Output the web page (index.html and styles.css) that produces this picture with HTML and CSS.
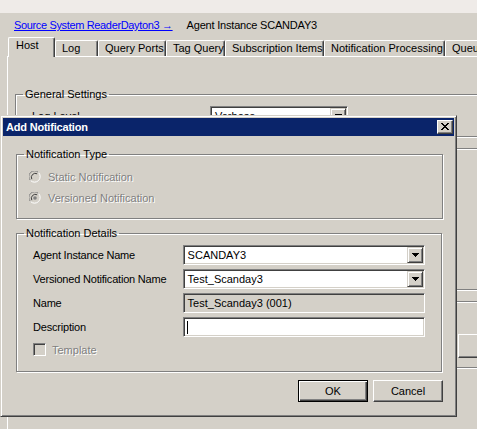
FILE: index.html
```html
<!DOCTYPE html>
<html>
<head>
<meta charset="utf-8">
<link rel="stylesheet" href="styles.css">
</head>
<body>
<div class="app">
  <div class="topstrip"></div>
  <div class="crumbs">
    <a href="#" class="crumb-link">Source System ReaderDayton3 &rarr;</a>
    <span class="agent">Agent Instance SCANDAY3</span>
  </div>
  <div class="tabs">
    <div class="tab active tab-host">Host</div>
    <div class="tab tab-log">Log</div>
    <div class="tab tab-ports">Query Ports</div>
    <div class="tab tab-tag">Tag Query</div>
    <div class="tab tab-sub">Subscription Items</div>
    <div class="tab tab-notif">Notification Processing</div>
    <div class="tab tab-queue">Queue</div>
  </div>
  <div class="panel">
    <fieldset class="group general">
      <legend>General Settings</legend>
      <div class="gen-row">
        <span class="gen-label">Log Level</span>
        <div class="combo gen-combo">
          <span class="combo-text">Verbose</span>
          <span class="drop"><svg width="7" height="4" viewBox="0 0 7 4"><path d="M0 0h7v1h-7zM1 1h5v1h-5zM2 2h3v1h-3zM3 3h1v1h-1z" fill="#000"/></svg></span>
        </div>
      </div>
    </fieldset>
    <div class="etched bg-group2"></div>
    <div class="etched bg-group3"><div class="bg-btn"></div></div>
  </div>
</div>

<div class="dialog">
  <div class="titlebar">
    <span class="title">Add Notification</span>
    <span class="close"><svg width="8" height="7" viewBox="0 0 8 7"><path d="M0 0h2v1h-2zM6 0h2v1h-2zM1 1h2v1h-2zM5 1h2v1h-2zM2 2h4v1h-4zM3 3h2v1h-2zM2 4h4v1h-4zM1 5h2v1h-2zM5 5h2v1h-2zM0 6h2v1h-2zM6 6h2v1h-2z" fill="#000"/></svg></span>
  </div>
  <div class="dlg-body">
    <fieldset class="group type-group">
      <legend>Notification Type</legend>
      <div class="group-inner type-inner">
        <div class="radio-row disabled">
          <span class="radio"><svg width="12" height="12" viewBox="0 0 12 12"><path d="M1.5 9.5A5 5 0 0 1 9.5 1.5" fill="none" stroke="#808080"/><path d="M9.5 1.5A5 5 0 0 1 1.5 9.5" fill="none" stroke="#fff"/><circle cx="6" cy="6" r="4" fill="#d4d0c8"/><path d="M2.8 8.2A4 4 0 0 1 8.2 2.8" fill="none" stroke="#404040"/></svg></span>
          <span class="dtext">Static Notification</span>
        </div>
        <div class="radio-row disabled">
          <span class="radio"><svg width="12" height="12" viewBox="0 0 12 12"><path d="M1.5 9.5A5 5 0 0 1 9.5 1.5" fill="none" stroke="#808080"/><path d="M9.5 1.5A5 5 0 0 1 1.5 9.5" fill="none" stroke="#fff"/><circle cx="6" cy="6" r="4" fill="#d4d0c8"/><path d="M2.8 8.2A4 4 0 0 1 8.2 2.8" fill="none" stroke="#404040"/><circle cx="6" cy="6" r="1.8" fill="#808080"/></svg></span>
          <span class="dtext">Versioned Notification</span>
        </div>
      </div>
    </fieldset>

    <fieldset class="group details-group">
      <legend>Notification Details</legend>
      <div class="group-inner details-inner">
        <div class="field-row">
          <span class="flabel">Agent Instance Name</span>
          <div class="combo field">
            <span class="combo-text">SCANDAY3</span>
            <span class="drop"><svg width="7" height="4" viewBox="0 0 7 4"><path d="M0 0h7v1h-7zM1 1h5v1h-5zM2 2h3v1h-3zM3 3h1v1h-1z" fill="#000"/></svg></span>
          </div>
        </div>
        <div class="field-row">
          <span class="flabel">Versioned Notification Name</span>
          <div class="combo field">
            <span class="combo-text">Test_Scanday3</span>
            <span class="drop"><svg width="7" height="4" viewBox="0 0 7 4"><path d="M0 0h7v1h-7zM1 1h5v1h-5zM2 2h3v1h-3zM3 3h1v1h-1z" fill="#000"/></svg></span>
          </div>
        </div>
        <div class="field-row">
          <span class="flabel">Name</span>
          <div class="combo field readonly">
            <span class="combo-text">Test_Scanday3 (001)</span>
          </div>
        </div>
        <div class="field-row">
          <span class="flabel">Description</span>
          <div class="combo field">
            <span class="caret"></span>
          </div>
        </div>
        <div class="check-row disabled">
          <span class="checkbox"></span>
          <span class="dtext">Template</span>
        </div>
      </div>
    </fieldset>

    <div class="buttons">
      <button class="btn default">OK</button>
      <button class="btn">Cancel</button>
    </div>
  </div>
</div>
</body>
</html>
```

FILE: styles.css
```css
* { box-sizing: border-box; }

html, body {
  margin: 0;
  padding: 0;
}

body {
  width: 477px;
  height: 429px;
  overflow: hidden;
  position: relative;
  background: #d4d0c8;
  font-family: "Liberation Sans", Arial, sans-serif;
  font-size: 11px;
  color: #000;
}

.app {
  width: 477px;
  height: 429px;
  overflow: hidden;
}

.topstrip {
  height: 13px;
  background: #efebe8;
}

.crumbs {
  height: 24px;
  display: flex;
  align-items: center;
  padding-left: 14px;
  white-space: nowrap;
}

.crumb-link {
  color: #0000ff;
  text-decoration: underline;
  letter-spacing: -0.35px;
}

.agent {
  margin-left: 14px;
  letter-spacing: -0.2px;
}

.tabs {
  display: flex;
  align-items: flex-end;
  height: 19px;
  padding-left: 8px;
  white-space: nowrap;
  position: relative;
  z-index: 1;
}

.tab {
  flex: none;
  height: 16px;
  padding: 0 0 0 6px;
  line-height: 15px;
  overflow: hidden;
  border-top: 1px solid #fff;
  border-left: 1px solid #fff;
  border-right: 1px solid #404040;
  box-shadow: inset -1px 0 #808080;
  border-top-left-radius: 2px;
  border-top-right-radius: 2px;
}

.tab.active {
  height: 20px;
  margin-bottom: -1px;
  background: #d4d0c8;
  padding: 0 0 2px 7px;
}

.tab-host { width: 47px; }
.tab-log { width: 43px; }
.tab-ports { width: 68px; }
.tab-tag { width: 59px; }
.tab-sub { width: 99px; }
.tab-notif { width: 121px; }
.tab-queue { width: 44px; }

.panel {
  margin-left: 7px;
  width: 600px;
  border-top: 1px solid #fff;
  border-left: 1px solid #fff;
  height: 380px;
  padding-left: 7px;
  padding-top: 31px;
}

.group {
  margin: 0;
  padding: 0;
  border: 1px solid #808080;
  box-shadow: inset 1px 1px #fff, 1px 1px #fff;
  min-width: 0;
}

.group legend {
  padding: 0 2px;
  margin-left: 7px;
  line-height: 13px;
}

.general {
  width: 600px;
}

.gen-row {
  display: flex;
  align-items: center;
  padding: 5px 0 10px 16px;
}

.gen-label {
  width: 178px;
}

.gen-combo {
  width: 138px;
  height: 20px;
}

.etched {
  border: 1px solid #808080;
  box-shadow: inset 1px 1px #fff, 1px 1px #fff;
  width: 600px;
}

.bg-group2 {
  margin-top: 11px;
  height: 142px;
}

.bg-group3 {
  margin-top: 11px;
  height: 67px;
  padding-top: 32px;
  padding-left: 442px;
}

.bg-btn {
  width: 60px;
  height: 24px;
  border: 1px solid;
  border-color: #fff #404040 #404040 #fff;
  box-shadow: inset -1px -1px #808080;
}

/* Dialog overlay */
.dialog {
  position: absolute;
  left: 0;
  top: 115px;
  width: 457px;
  height: 302px;
  background: #d4d0c8;
  border: 1px solid;
  border-color: #d4d0c8 #404040 #404040 #d4d0c8;
  box-shadow: inset 1px 1px #fff, inset -1px -1px #808080;
  padding: 2px;
  display: flex;
  flex-direction: column;
}

.titlebar {
  height: 18px;
  background: #0a246a;
  color: #fff;
  display: flex;
  align-items: center;
  justify-content: space-between;
  padding: 0 1px 0 3px;
}

.title {
  font-weight: bold;
  letter-spacing: -0.2px;
}

.close {
  width: 16px;
  height: 14px;
  background: #d4d0c8;
  border: 1px solid;
  border-color: #fff #404040 #404040 #fff;
  box-shadow: inset -1px -1px #808080;
  display: flex;
  align-items: center;
  justify-content: center;
  padding-bottom: 1px;
}

.close svg { display: block; }

.dlg-body {
  padding: 12px 11px 0 13px;
}

.type-inner {
  padding: 5px 0 10px 12px;
}

.radio-row {
  height: 21px;
  display: flex;
  align-items: center;
}

.radio {
  width: 12px;
  height: 12px;
  margin-right: 7px;
}

.radio svg { display: block; }

.dtext {
  color: #808080;
  text-shadow: 1px 1px 0 #fff;
}

.details-group {
  margin-top: 8px;
  margin-right: 1px;
}

.details-inner {
  padding: 5px 16px 15px 16px;
}

.flabel {
  width: 150px;
  letter-spacing: -0.2px;
}

.field-row {
  display: flex;
  align-items: center;
  margin-bottom: 4px;
}

.combo {
  display: flex;
  align-items: center;
  height: 20px;
  background: #fff;
  border: 1px solid;
  border-color: #808080 #fff #fff #808080;
  box-shadow: inset 1px 1px #404040, inset -1px -1px #d4d0c8;
  padding: 2px;
}

.field {
  width: 243px;
}

.combo.readonly {
  background: #d4d0c8;
}

.combo-text {
  flex: 1;
  padding-left: 2px;
  white-space: nowrap;
}

.drop {
  width: 16px;
  height: 16px;
  margin-right: -1px;
  background: #d4d0c8;
  border: 1px solid;
  border-color: #d4d0c8 #404040 #404040 #d4d0c8;
  box-shadow: inset 1px 1px #fff, inset -1px -1px #808080;
  display: flex;
  align-items: center;
  justify-content: center;
}

.drop svg { display: block; }

.caret {
  width: 1px;
  height: 13px;
  background: #000;
  margin-left: 1px;
}

.check-row {
  display: flex;
  align-items: center;
  height: 13px;
  margin-top: 6px;
}

.checkbox {
  width: 13px;
  height: 13px;
  border: 1px solid;
  border-color: #808080 #fff #fff #808080;
  box-shadow: inset 1px 1px #404040, inset -1px -1px #d4d0c8;
  background: #d4d0c8;
  margin-right: 6px;
}

.buttons {
  display: flex;
  justify-content: flex-end;
  gap: 5px;
  margin-top: 8px;
}

.btn {
  width: 70px;
  height: 22px;
  font-family: "Liberation Sans", Arial, sans-serif;
  font-size: 11px;
  color: #000;
  background: #d4d0c8;
  border: 1px solid;
  border-color: #fff #404040 #404040 #fff;
  box-shadow: inset -1px -1px #808080;
  padding: 0;
}

.btn.default {
  border: 1px solid #000;
  box-shadow: inset 1px 1px #fff, inset -1px -1px #404040, inset -2px -2px #808080;
}
```
